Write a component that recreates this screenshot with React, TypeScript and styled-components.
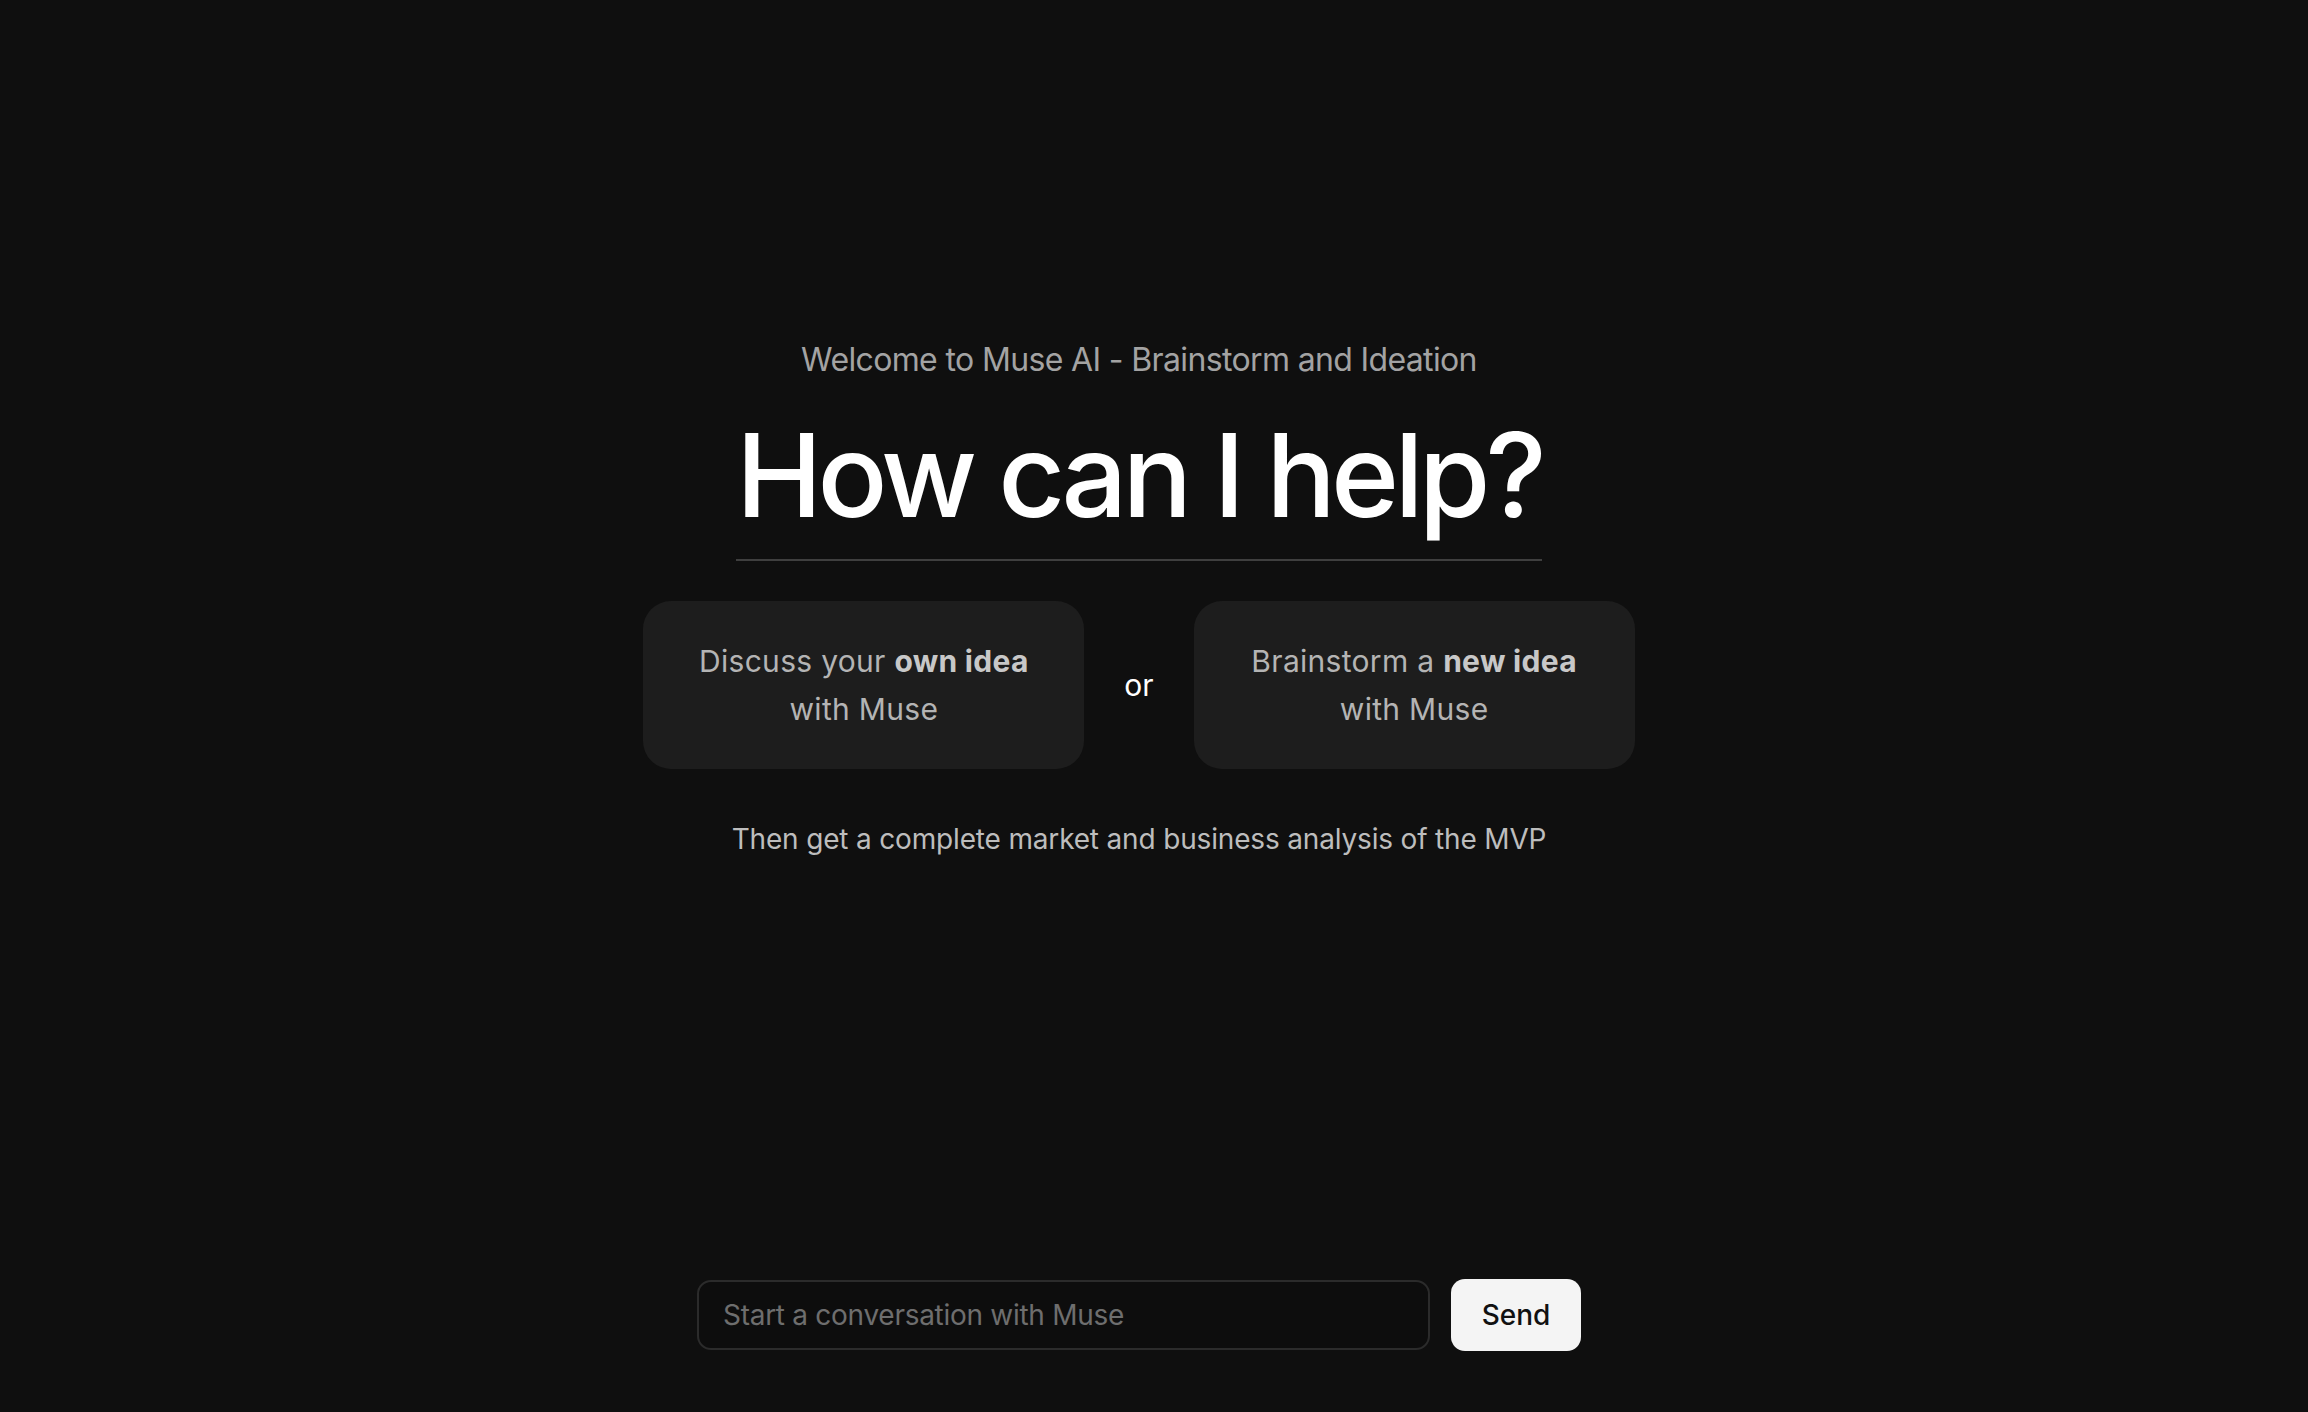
import styled, { createGlobalStyle } from 'styled-components';

const GlobalStyle = createGlobalStyle`
  html, body {
    margin: 0;
    padding: 0;
    background: #0f0f0f;
  }
  * {
    box-sizing: border-box;
  }
`;

const Page = styled.div`
  width: 100%;
  height: 1412px;
  display: flex;
  flex-direction: column;
  align-items: center;
  padding-right: 30px;
  background: #0f0f0f;
  font-family: Inter, 'Noto Sans', sans-serif;
`;

const Main = styled.main`
  flex: 1;
  display: flex;
  flex-direction: column;
  align-items: center;
  padding-top: 338px;
`;

const Welcome = styled.p`
  margin: 0;
  font-size: 32px;
  line-height: 44px;
  letter-spacing: -0.02em;
  color: #a3a3a3;
`;

const Heading = styled.h1`
  margin: 23px 0 0;
  padding-bottom: 14px;
  font-size: 116px;
  line-height: 140px;
  font-weight: 500;
  letter-spacing: -0.042em;
  color: #ffffff;
  border-bottom: 2px solid #3f3f3f;
`;

const Choices = styled.div`
  margin-top: 40px;
  display: flex;
  align-items: center;
  gap: 40px;
`;

const Card = styled.button`
  width: 441px;
  height: 168px;
  border: none;
  border-radius: 28px;
  background: #1d1d1d;
  color: #b4b4b4;
  font-family: inherit;
  font-size: 30px;
  line-height: 48px;
  letter-spacing: 0.01em;
  text-align: center;
  cursor: pointer;

  b {
    color: #c8c8c8;
    font-weight: 700;
  }
`;

const Or = styled.span`
  font-size: 30px;
  color: #ffffff;
`;

const Note = styled.p`
  margin: 50px 0 0;
  font-size: 28px;
  line-height: 40px;
  letter-spacing: -0.006em;
  color: #bdbdbd;
`;

const Footer = styled.form`
  display: flex;
  align-items: center;
  gap: 21px;
  padding-bottom: 61px;
`;

const Input = styled.input`
  width: 733px;
  height: 70px;
  padding: 0 24px;
  border: 2px solid #2b2b2b;
  border-radius: 14px;
  background: #0d0d0d;
  color: #e5e5e5;
  font-family: inherit;
  font-size: 28px;
  letter-spacing: -0.01em;
  outline: none;

  &::placeholder {
    color: #6e6e6e;
  }
`;

const SendButton = styled.button`
  width: 130px;
  height: 72px;
  border: none;
  border-radius: 14px;
  background: #f4f4f4;
  color: #111111;
  font-family: inherit;
  font-size: 28px;
  font-weight: 500;
  cursor: pointer;
`;

export default function App() {
  return (
    <>
      <GlobalStyle />
      <Page>
        <Main>
          <Welcome>Welcome to Muse AI - Brainstorm and Ideation</Welcome>
          <Heading>How can I help?</Heading>
          <Choices>
            <Card type="button">
              Discuss your <b>own idea</b>
              <br />
              with Muse
            </Card>
            <Or>or</Or>
            <Card type="button">
              Brainstorm a <b>new idea</b>
              <br />
              with Muse
            </Card>
          </Choices>
          <Note>Then get a complete market and business analysis of the MVP</Note>
        </Main>
        <Footer onSubmit={(e) => e.preventDefault()}>
          <Input placeholder="Start a conversation with Muse" />
          <SendButton type="submit">Send</SendButton>
        </Footer>
      </Page>
    </>
  );
}
